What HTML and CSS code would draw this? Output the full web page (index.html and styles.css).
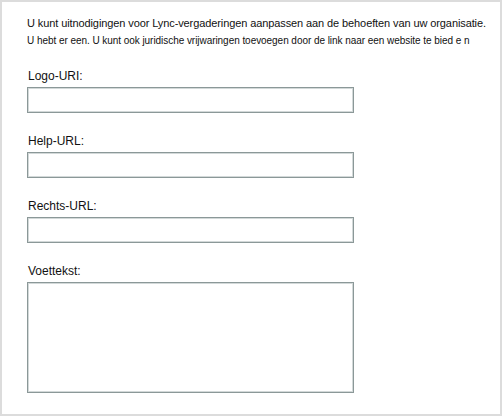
FILE: index.html
```html
<!DOCTYPE html>
<html lang="nl">
<head>
<meta charset="utf-8">
<link rel="stylesheet" href="styles.css">
</head>
<body>
<div class="frame">
  <p class="intro">U kunt uitnodigingen voor Lync-vergaderingen aanpassen aan de behoeften van uw organisatie.</p>
  <p class="sub">U hebt er een. U kunt ook juridische vrijwaringen toevoegen door de link naar een website te bied e n</p>
  <div class="field">
    <label class="label">Logo-URI:</label>
    <div class="input"></div>
  </div>
  <div class="field">
    <label class="label">Help-URL:</label>
    <div class="input"></div>
  </div>
  <div class="field">
    <label class="label">Rechts-URL:</label>
    <div class="input"></div>
  </div>
  <div class="field">
    <label class="label">Voettekst:</label>
    <div class="input area"></div>
  </div>
</div>
</body>
</html>
```
FILE: styles.css
```css
html, body {
  margin: 0;
  padding: 0;
  background: #ffffff;
}
.frame {
  box-sizing: border-box;
  width: 502px;
  height: 416px;
  border: 2px solid #dcdcdc;
  padding: 14px 0 0 25px;
  font-family: "Liberation Sans", Arial, sans-serif;
  color: #111111;
  display: flex;
  flex-direction: column;
}
.intro {
  margin: 0;
  font-size: 11px;
  line-height: 14px;
  letter-spacing: -0.1px;
  white-space: nowrap;
}
.sub {
  margin: 4px 0 0 0;
  font-size: 10px;
  line-height: 14px;
  letter-spacing: -0.05px;
  white-space: nowrap;
}
.field {
  display: flex;
  flex-direction: column;
  margin-top: 20px;
}
.label {
  font-size: 12px;
  line-height: 16px;
  margin-left: 1px;
  margin-bottom: 3px;
}
.input {
  box-sizing: border-box;
  width: 327px;
  height: 26px;
  border: 1px solid #8b9898;
  box-shadow: inset 0 0 0 1px #d3d9d9;
  background: #fff;
}
.input.area {
  height: 111px;
}
```
